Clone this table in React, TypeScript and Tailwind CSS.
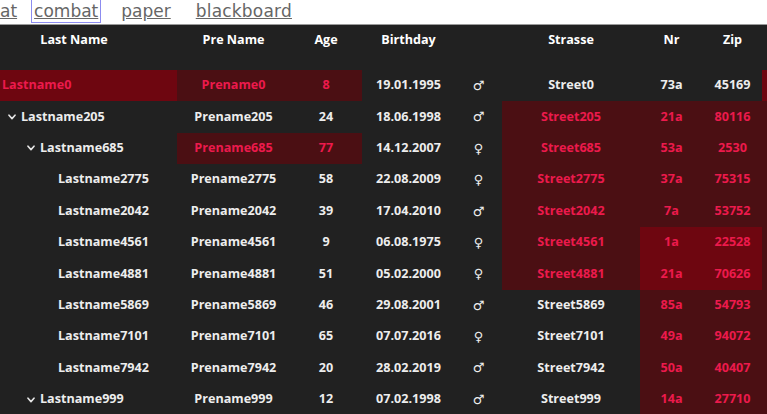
import React from "react";

type Row = {
  last: string;
  indent: string;
  chevron: boolean;
  pre: string;
  age: string;
  bday: string;
  male: boolean;
  street: string;
  nr: string;
  zip: string;
  hl: number[]; // per column A..I: 0 none, 1 dark, 2 bright
};

const rows: Row[] = [
  { last: "Lastname0", indent: "pl-[2px]", chevron: false, pre: "Prename0", age: "8", bday: "19.01.1995", male: true, street: "Street0", nr: "73a", zip: "45169", hl: [2, 1, 1, 0, 0, 0, 0, 0, 2] },
  { last: "Lastname205", indent: "pl-[8px]", chevron: true, pre: "Prename205", age: "24", bday: "18.06.1998", male: true, street: "Street205", nr: "21a", zip: "80116", hl: [0, 0, 0, 0, 0, 1, 1, 1, 1] },
  { last: "Lastname685", indent: "pl-[27px]", chevron: true, pre: "Prename685", age: "77", bday: "14.12.2007", male: false, street: "Street685", nr: "53a", zip: "2530", hl: [0, 1, 1, 0, 0, 1, 1, 1, 1] },
  { last: "Lastname2775", indent: "pl-[58px]", chevron: false, pre: "Prename2775", age: "58", bday: "22.08.2009", male: false, street: "Street2775", nr: "37a", zip: "75315", hl: [0, 0, 0, 0, 0, 1, 1, 1, 1] },
  { last: "Lastname2042", indent: "pl-[58px]", chevron: false, pre: "Prename2042", age: "39", bday: "17.04.2010", male: true, street: "Street2042", nr: "7a", zip: "53752", hl: [0, 0, 0, 0, 0, 1, 1, 1, 1] },
  { last: "Lastname4561", indent: "pl-[58px]", chevron: false, pre: "Prename4561", age: "9", bday: "06.08.1975", male: false, street: "Street4561", nr: "1a", zip: "22528", hl: [0, 0, 0, 0, 0, 1, 2, 2, 1] },
  { last: "Lastname4881", indent: "pl-[58px]", chevron: false, pre: "Prename4881", age: "51", bday: "05.02.2000", male: false, street: "Street4881", nr: "21a", zip: "70626", hl: [0, 0, 0, 0, 0, 1, 2, 2, 1] },
  { last: "Lastname5869", indent: "pl-[58px]", chevron: false, pre: "Prename5869", age: "46", bday: "29.08.2001", male: true, street: "Street5869", nr: "85a", zip: "54793", hl: [0, 0, 0, 0, 0, 0, 1, 1, 1] },
  { last: "Lastname7101", indent: "pl-[58px]", chevron: false, pre: "Prename7101", age: "65", bday: "07.07.2016", male: false, street: "Street7101", nr: "49a", zip: "94072", hl: [0, 0, 0, 0, 0, 0, 1, 1, 1] },
  { last: "Lastname7942", indent: "pl-[58px]", chevron: false, pre: "Prename7942", age: "20", bday: "28.02.2019", male: true, street: "Street7942", nr: "50a", zip: "40407", hl: [0, 0, 0, 0, 0, 0, 1, 1, 1] },
  { last: "Lastname999", indent: "pl-[27px]", chevron: true, pre: "Prename999", age: "12", bday: "07.02.1998", male: true, street: "Street999", nr: "14a", zip: "27710", hl: [0, 0, 0, 0, 0, 0, 1, 1, 1] },
];

const bgFor = (h: number) =>
  h === 2 ? "bg-[#6e0610]" : h === 1 ? "bg-[#4b0f13]" : "bg-transparent";
const fgFor = (h: number) => (h > 0 ? "text-[#ec1a4c]" : "text-[#ededed]");

function Chevron() {
  return (
    <svg width="8" height="6" viewBox="0 0 8 6" className="mr-[5px] shrink-0">
      <path d="M1 1.2 L4 4.6 L7 1.2" fill="none" stroke="#e6e6e6" strokeWidth="1.6" strokeLinecap="round" strokeLinejoin="round" />
    </svg>
  );
}

function Cell({ h, children, className = "" }: { h: number; children?: React.ReactNode; className?: string }) {
  return (
    <div className={`h-[31.4px] flex items-center ${bgFor(h)} ${fgFor(h)} ${className}`}>
      {children}
    </div>
  );
}

export default function App() {
  return (
    <div className="w-[767px] h-[414px] overflow-hidden bg-[#212121] flex flex-col">
      <div className="h-[25px] shrink-0 bg-white border-b border-[#9a9a9a] flex items-start text-[17px] text-[#666] font-['DejaVu_Sans',sans-serif] leading-[22px]">
        <a className="underline mr-[15px]">at</a>
        <a className="underline mr-[20px] px-[2px] outline outline-1 outline-[#8c8cf0]">combat</a>
        <a className="underline mr-[23px] px-[1px]">paper</a>
        <a className="underline px-[1px] tracking-[0.2px]">blackboard</a>
      </div>
      <div className="font-['Open_Sans',sans-serif] text-[12.6px] font-bold">
        <div className="grid grid-cols-[177px_113px_72px_93px_47px_138px_63px_59px_40px] h-[45px] items-start pt-[6px] text-white font-bold">
          <div className="text-center pr-[29px]">Last Name</div>
          <div className="text-center">Pre Name</div>
          <div className="text-center">Age</div>
          <div className="text-center">Birthday</div>
          <div />
          <div className="text-center">Strasse</div>
          <div className="text-center">Nr</div>
          <div className="text-center">Zip</div>
          <div />
        </div>
        <div className="grid grid-cols-[177px_113px_72px_93px_47px_138px_63px_59px_40px]">
          {rows.map((r) => (
            <React.Fragment key={r.last}>
              <Cell h={r.hl[0]} className={r.indent}>
                {r.chevron && <Chevron />}
                <span>{r.last}</span>
              </Cell>
              <Cell h={r.hl[1]} className="justify-center">{r.pre}</Cell>
              <Cell h={r.hl[2]} className="justify-center">{r.age}</Cell>
              <Cell h={r.hl[3]} className="justify-center">{r.bday}</Cell>
              <Cell h={r.hl[4]} className="justify-center font-['DejaVu_Sans',sans-serif] font-normal text-[13px] text-[#bdbdbd]">
                {r.male ? "♂" : "♀"}
              </Cell>
              <Cell h={r.hl[5]} className="justify-center">{r.street}</Cell>
              <Cell h={r.hl[6]} className="justify-center">{r.nr}</Cell>
              <Cell h={r.hl[7]} className="justify-center">{r.zip}</Cell>
              <Cell h={r.hl[8]} className="justify-center" />
            </React.Fragment>
          ))}
        </div>
      </div>
    </div>
  );
}
